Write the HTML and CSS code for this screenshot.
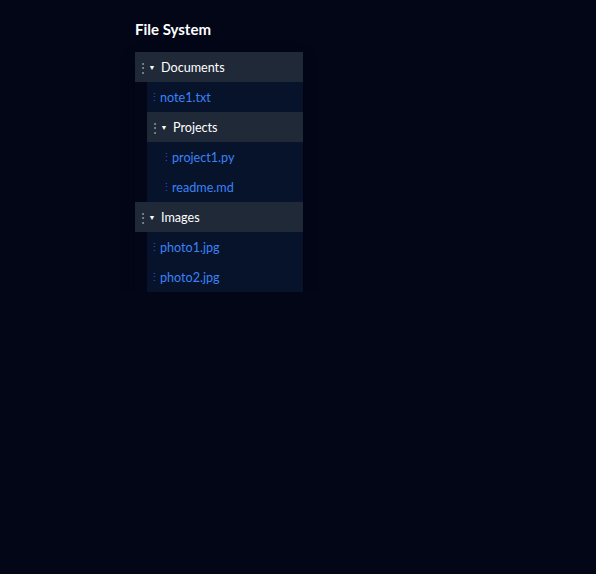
FILE: index.html
```html
<!DOCTYPE html>
<html>
<head>
<meta charset="utf-8">
<link rel="stylesheet" href="styles.css">
</head>
<body>
<div class="panel">
  <h2 class="title">File System</h2>
  <div class="tree">
    <div class="row folder"><span class="handle">⋮</span><span class="arrow">▼</span><span class="name">Documents</span></div>
    <div class="children">
      <div class="row file"><span class="handle">⋮</span><span class="name">note1.txt</span></div>
      <div class="row folder"><span class="handle">⋮</span><span class="arrow">▼</span><span class="name">Projects</span></div>
      <div class="children">
        <div class="row file"><span class="handle">⋮</span><span class="name">project1.py</span></div>
        <div class="row file"><span class="handle">⋮</span><span class="name">readme.md</span></div>
      </div>
    </div>
    <div class="row folder"><span class="handle">⋮</span><span class="arrow">▼</span><span class="name">Images</span></div>
    <div class="children">
      <div class="row file"><span class="handle">⋮</span><span class="name">photo1.jpg</span></div>
      <div class="row file"><span class="handle">⋮</span><span class="name">photo2.jpg</span></div>
    </div>
  </div>
</div>
</body>
</html>
```

FILE: styles.css
```css
html, body {
  margin: 0;
  padding: 0;
  background: #020617;
  font-family: Lato, "Noto Sans", sans-serif;
}
.panel {
  padding: 19px 0 0 135px;
}
.title {
  margin: 0 0 12px 0;
  font-size: 15px;
  font-weight: 700;
  color: #ffffff;
  line-height: 21px;
}
.tree {
  width: 168px;
  box-shadow: 0 4px 12px rgba(0,0,0,0.35);
}
.row {
  display: flex;
  align-items: center;
  height: 30px;
  font-size: 12.6px;
  box-sizing: border-box;
  padding-left: 2px;
}
.folder {
  background: #1f2937;
  color: #ffffff;
}
.file {
  color: #3b82f6;
}
.handle {
  width: 8px;
  text-align: center;
  font-size: 12px;
  color: #9ca3af;
}
.file .handle {
  color: #1d4ed8;
  font-size: 11px;
}
.arrow {
  font-size: 7px;
  width: 10px;
  margin-left: 2px;
  text-align: center;
}
.folder .name { margin-left: 4px; }
.file .name { margin-left: 3px; }
.children {
  margin-left: 12px;
  background: #07132b;
}
```
